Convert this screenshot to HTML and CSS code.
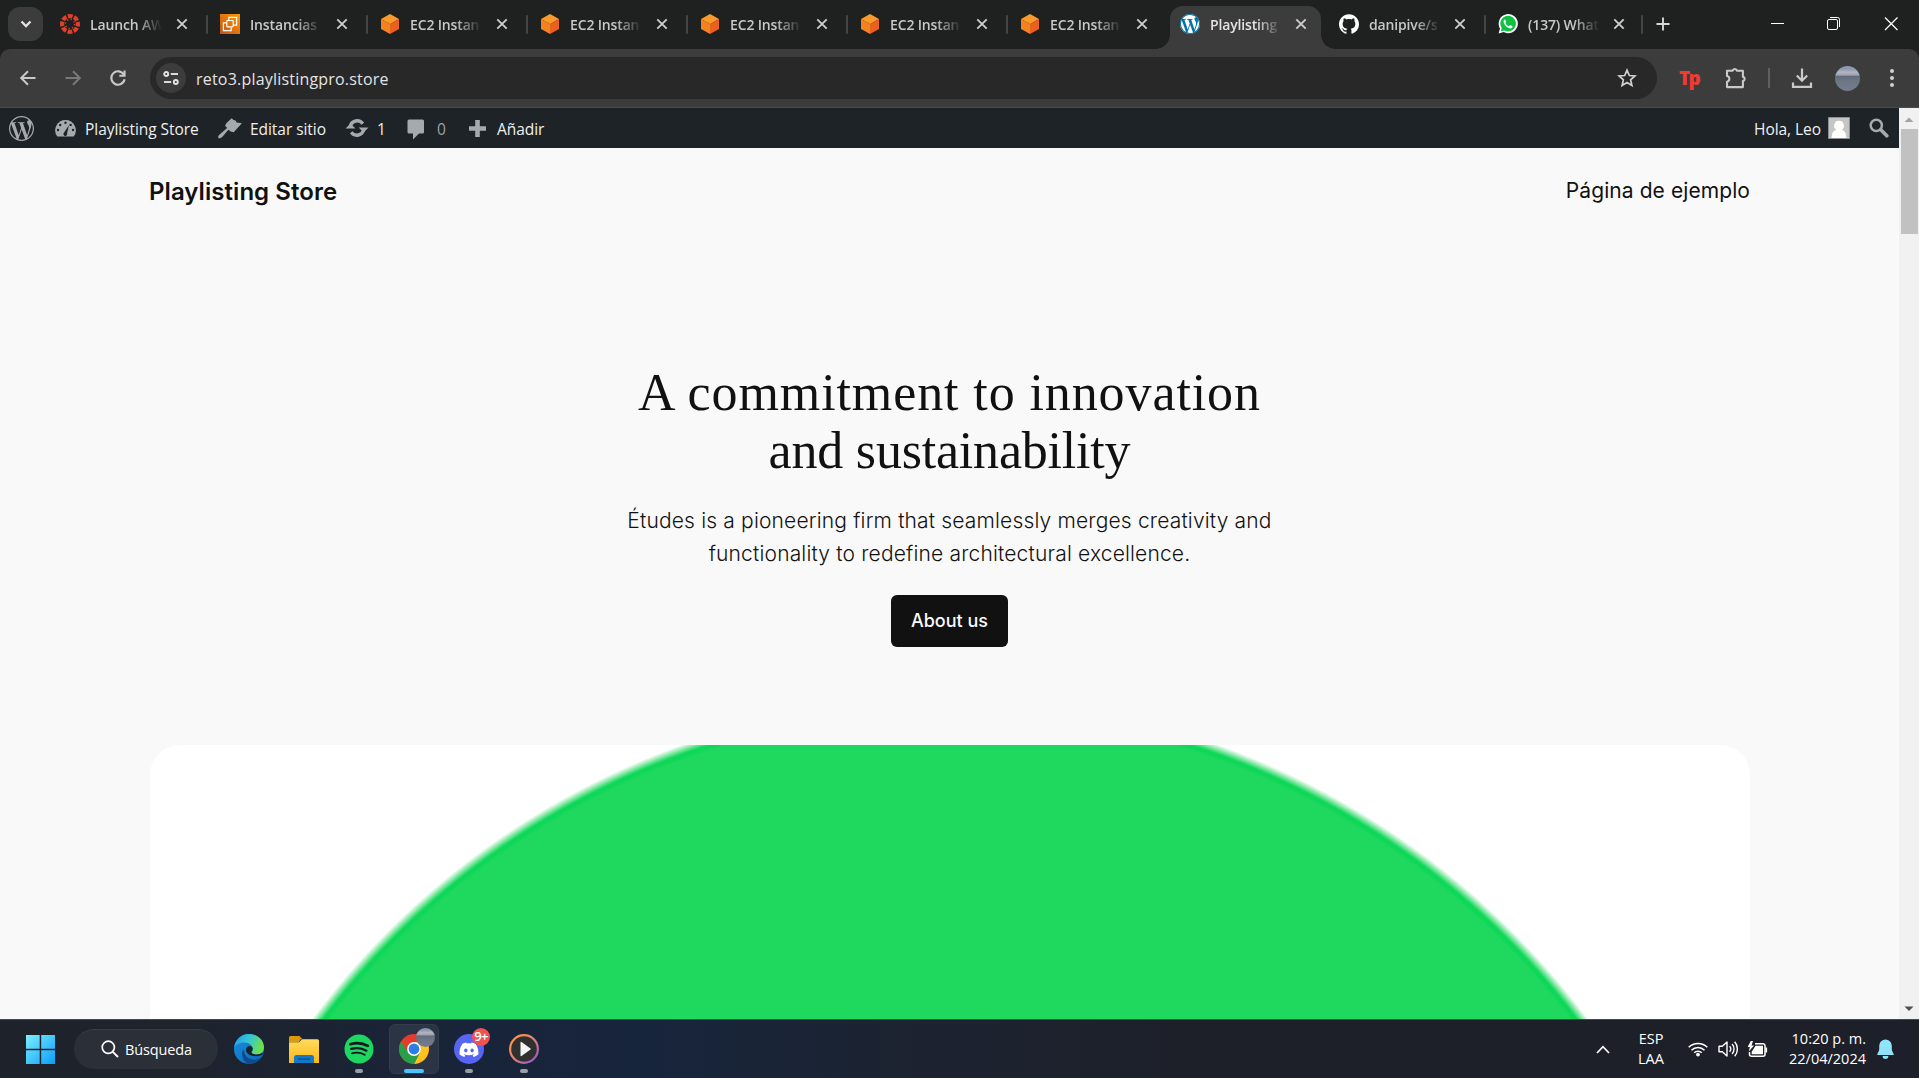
FILE: index.html
```html
<!DOCTYPE html>
<html lang="es">
<head>
<meta charset="utf-8">
<title>Playlisting Store</title>
<link rel="stylesheet" href="styles.css">
</head>
<body>
<svg class="defs" width="0" height="0" aria-hidden="true">
  <defs>
    <linearGradient id="gWin" x1="0" y1="0" x2="1" y2="1"><stop offset="0" stop-color="#7df0fd"/><stop offset="1" stop-color="#0a9dfb"/></linearGradient>
    <linearGradient id="gEdgeTop" x1="0" y1="0" x2="1" y2="0.3"><stop offset="0" stop-color="#1f9bdf"/><stop offset=".5" stop-color="#33c3dc"/><stop offset="1" stop-color="#6be04f"/></linearGradient>
    <linearGradient id="gEdgeLow" x1="0" y1="0" x2="1" y2="1"><stop offset="0" stop-color="#1b8fdd"/><stop offset="1" stop-color="#0b67b8"/></linearGradient>
    <linearGradient id="gFolder" x1="0" y1="0" x2="0" y2="1"><stop offset="0" stop-color="#ffdb5c"/><stop offset="1" stop-color="#fbb716"/></linearGradient>
    <linearGradient id="gMedia" x1="0" y1="0" x2="1" y2="1"><stop offset="0" stop-color="#ff9a3d"/><stop offset=".5" stop-color="#e98078"/><stop offset="1" stop-color="#7d56d8"/></linearGradient>
    <linearGradient id="gAws" x1="0" y1="1" x2="1" y2="0"><stop offset="0" stop-color="#c8511b"/><stop offset="1" stop-color="#f90"/></linearGradient>
    <symbol id="close" viewBox="0 0 12 12"><path d="M1.3 1.3l9.4 9.4M10.7 1.3l-9.4 9.4" stroke="currentColor" stroke-width="1.8" fill="none"/></symbol>
    <symbol id="cube" viewBox="0 0 20 20"><path d="M10 0l9 5-9 5.2L1 5z" fill="#fc9a29"/><path d="M1 5l9 5.200V20l-9-5z" fill="#f58220"/><path d="M19 5l-9 5.200V20l9-5z" fill="#e9601f"/></symbol>
    <symbol id="wp" viewBox="0 0 24 24"><path fill="currentColor" d="M21.469 6.825c.84 1.537 1.318 3.3 1.318 5.175 0 3.979-2.156 7.456-5.363 9.325l3.295-9.527c.615-1.54.82-2.771.82-3.864 0-.405-.026-.78-.07-1.11m-7.981.105c.647-.03 1.232-.105 1.232-.105.582-.075.514-.93-.067-.899 0 0-1.755.135-2.88.135-1.064 0-2.85-.15-2.85-.15-.585-.03-.661.855-.075.885 0 0 .54.061 1.125.09l1.68 4.605-2.37 7.08L5.354 6.9c.649-.03 1.234-.1 1.234-.1.585-.075.516-.93-.065-.896 0 0-1.746.138-2.874.138-.2 0-.438-.008-.69-.015C4.911 3.15 8.235 1.215 12 1.215c2.809 0 5.365 1.072 7.286 2.833-.046-.003-.091-.009-.141-.009-1.06 0-1.812.923-1.812 1.914 0 .89.513 1.643 1.06 2.531.411.72.89 1.643.89 2.977 0 .915-.354 1.994-.821 3.479l-1.075 3.585-3.9-11.61.001.014zM12 22.784c-1.059 0-2.081-.153-3.048-.437l3.237-9.406 3.315 9.087c.024.053.05.101.078.149-1.12.393-2.325.609-3.582.609M1.211 12c0-1.564.336-3.05.935-4.39L7.29 21.709C3.694 19.96 1.212 16.271 1.211 12M12 0C5.385 0 0 5.385 0 12s5.385 12 12 12 12-5.385 12-12S18.615 0 12 0"/></symbol>
  </defs>
</svg>

<header class="tabstrip">
  <button class="tab-search" aria-label="Buscar pestañas"><svg width="12" height="8" viewBox="0 0 12 8"><path d="M1.500 1.500L6 6l4.500-4.500" fill="none" stroke="#e3e3e3" stroke-width="2.300"/></svg></button>
  <nav class="tabs">
    <div class="tab sep">
      <svg class="fav" viewBox="0 0 20 20"><circle cx="10" cy="10" r="7.900" fill="none" stroke="#e13f2b" stroke-width="4.200" stroke-dasharray="4.700 1.505" stroke-dashoffset="2.350"/><circle cx="10" cy="10" r="4.600" fill="none" stroke="#e13f2b" stroke-width="1.300" stroke-dasharray="1.300 2.313"/></svg>
      <span class="label">Launch AWS</span><svg class="x"><use href="#close"/></svg>
    </div>
    <div class="tab sep">
      <svg class="fav" viewBox="0 0 20 20"><path fill="url(#gAws)" d="M0 0h20v20H0z"/><g fill="none" stroke="#fff" stroke-width="1.200"><rect x="6.800" y="6.500" width="6.400" height="6.400" rx=".8"/><path d="M8.800 6.200V3.300h7.800v7.800h-3.100M6.500 8.800H3.400v7.800h7.800v-3.400"/></g></svg>
      <span class="label">Instancias</span><svg class="x"><use href="#close"/></svg>
    </div>
    <div class="tab sep"><svg class="fav"><use href="#cube"/></svg><span class="label">EC2 Instan</span><svg class="x"><use href="#close"/></svg></div>
    <div class="tab sep"><svg class="fav"><use href="#cube"/></svg><span class="label">EC2 Instan</span><svg class="x"><use href="#close"/></svg></div>
    <div class="tab sep"><svg class="fav"><use href="#cube"/></svg><span class="label">EC2 Instan</span><svg class="x"><use href="#close"/></svg></div>
    <div class="tab sep"><svg class="fav"><use href="#cube"/></svg><span class="label">EC2 Instan</span><svg class="x"><use href="#close"/></svg></div>
    <div class="tab"><svg class="fav"><use href="#cube"/></svg><span class="label">EC2 Instan</span><svg class="x"><use href="#close"/></svg></div>
    <div class="tab active">
      <span class="fav fav-wp"><svg width="20" height="20"><use href="#wp"/></svg></span>
      <span class="label">Playlisting</span><svg class="x"><use href="#close"/></svg>
    </div>
    <div class="tab sep">
      <svg class="fav" viewBox="0 0 24 24"><path fill="#fff" d="M12 .297c-6.630 0-12 5.373-12 12 0 5.303 3.438 9.800 8.205 11.385.6.113.82-.258.82-.577 0-.285-.01-1.040-.015-2.040-3.338.724-4.042-1.610-4.042-1.610C4.422 18.070 3.633 17.700 3.633 17.700c-1.087-.744.084-.729.084-.729 1.205.084 1.838 1.236 1.838 1.236 1.070 1.835 2.809 1.305 3.495.998.108-.776.417-1.305.76-1.605-2.665-.3-5.466-1.332-5.466-5.930 0-1.310.465-2.380 1.235-3.220-.135-.303-.54-1.523.105-3.176 0 0 1.005-.322 3.300 1.230.96-.267 1.980-.399 3-.405 1.020.006 2.040.138 3 .405 2.280-1.552 3.285-1.230 3.285-1.230.645 1.653.24 2.873.12 3.176.765.84 1.230 1.910 1.230 3.220 0 4.610-2.805 5.625-5.475 5.920.42.36.81 1.096.81 2.220 0 1.606-.015 2.896-.015 3.286 0 .315.21.69.825.57C20.565 22.092 24 17.592 24 12.297c0-6.627-5.373-12-12-12"/></svg>
      <span class="label">danipive/s</span><svg class="x"><use href="#close"/></svg>
    </div>
    <div class="tab sep">
      <svg class="fav" viewBox="0 0 20 20"><path d="M.6 19.500l1.400-5A9.600 9.600 0 1 1 5.600 18z" fill="#fff"/><path d="M2.800 17.300l.9-3.200a7.800 7.800 0 1 1 2.700 2.400z" fill="#0dc143"/><path d="M6.700 5.500c-.9.500-1.400 1.600-1 2.900.8 2.900 3.200 5.100 5.900 5.900 1.300.3 2.600-.3 2.900-1.400.1-.5 0-.7-.2-.8l-2-.9c-.3-.1-.5 0-.7.200l-.7.900c-1.600-.6-2.800-1.700-3.600-3.200l.7-.9c.1-.2.100-.4 0-.7l-.8-1.800c-.1-.2-.3-.3-.500-.2z" fill="#fff"/></svg>
      <span class="label">(137) What</span><svg class="x"><use href="#close"/></svg>
    </div>
  </nav>
  <button class="new-tab" aria-label="Nueva pestaña"><svg width="14" height="14" viewBox="0 0 14 14"><path d="M7 .5v13M.5 7h13" stroke="#d5d5d5" stroke-width="1.900"/></svg></button>
  <div class="window-buttons">
    <svg width="57" height="48" viewBox="0 0 57 48"><path d="M22 23.500h13" stroke="#fff"/></svg>
    <svg width="56" height="48" viewBox="0 0 56 48"><g fill="none" stroke="#fff"><rect x="21.500" y="19.500" width="10" height="10" rx="1.500"/><path d="M24 17.500h7.500a2 2 0 0 1 2 2V27"/></g></svg>
    <svg width="57" height="48" viewBox="0 0 57 48"><path d="M23 17.500l12.500 12.500M35.500 17.500L23 30" stroke="#fff" stroke-width="1.200"/></svg>
  </div>
</header>

<div class="toolbar">
  <div class="nav-buttons">
    <svg width="18" height="18" viewBox="0 0 18 18"><path d="M16.500 9H3M9 2.200L2.200 9 9 15.800" fill="none" stroke="#c9c9c9" stroke-width="2"/></svg>
    <svg width="18" height="18" viewBox="0 0 18 18"><path d="M1.500 9H15M9 2.200L15.800 9 9 15.800" fill="none" stroke="#797979" stroke-width="2"/></svg>
    <svg width="18" height="18" viewBox="0 0 18 18"><path d="M14.800 5.600A6.700 6.700 0 1 0 15.600 10.300" fill="none" stroke="#c9c9c9" stroke-width="2.100"/><path d="M16.600 1.500v6.300h-6.300V5.800h4.200V1.500z" fill="#c9c9c9"/></svg>
  </div>
  <div class="omnibox">
    <span class="site-chip"><svg width="16" height="14" viewBox="0 0 16 14"><g fill="none" stroke="#e3e3e3" stroke-width="1.900"><circle cx="3.200" cy="3" r="2"/><path d="M7.800 3H15"/><circle cx="12.800" cy="11" r="2"/><path d="M1 11h7.200"/></g></svg></span>
    <span class="url">reto3.playlistingpro.store</span>
    <svg class="star" width="20" height="20" viewBox="0 0 20 20"><path d="M10 2.200l2.300 5.300 5.600.5-4.300 3.800 1.300 5.700-4.900-3-4.900 3 1.300-5.700L2.100 8l5.600-.5z" fill="none" stroke="#d0d0d0" stroke-width="1.700"/></svg>
  </div>
  <div class="extensions">
    <span class="tp">Tp</span>
    <svg class="puzzle" width="22" height="22" viewBox="0 0 22 22"><path d="M2 3.800h5.600a2.200 2.200 0 0 1 4.300 0h6v6a2.200 2.200 0 0 1 0 4.300v6H2v-5.400a2.900 2.900 0 0 0 0-5.700z" fill="none" stroke="#c9c9c9" stroke-width="2.100" stroke-linejoin="round"/></svg>
    <i class="divider"></i>
    <svg class="download" width="22" height="21" viewBox="0 0 22 21"><path d="M11 .5v12M5.800 7.500l5.200 5.200 5.200-5.200M2 14.500v4.300h18v-4.300" fill="none" stroke="#c9c9c9" stroke-width="2.200"/></svg>
    <span class="profile"></span>
    <svg class="dots" width="6" height="20" viewBox="0 0 6 20"><g fill="#d0d0d0"><circle cx="3" cy="3" r="2"/><circle cx="3" cy="10" r="2"/><circle cx="3" cy="17" r="2"/></g></svg>
  </div>
</div>

<div class="viewport">
  <div class="page">
    <div class="adminbar">
      <svg class="ab-logo" width="25" height="25"><use href="#wp"/></svg>
      <svg class="ab-gauge" width="21" height="17" viewBox="0 0 21 17"><path d="M10.500 0A10.300 10.300 0 0 0 2.300 16.500h16.400A10.300 10.300 0 0 0 10.500 0z" fill="#a7aaad"/><g fill="#1d2327"><circle cx="10.500" cy="2.800" r="1.200"/><circle cx="5.200" cy="5" r="1.200"/><circle cx="3" cy="10" r="1.200"/><circle cx="18" cy="10" r="1.200"/><circle cx="15.600" cy="4.900" r="1.200"/><path d="M13.900 5.200l-1.800 8.200a1.900 1.900 0 1 1-3-.9z"/></g></svg>
      <span class="ab-text ab-site">Playlisting Store</span>
      <svg class="ab-brush" width="24" height="21" viewBox="0 0 24 21"><path d="M8.500 5L13.700.2l1.800 1.900 2 .3 1.200 2 5.200.8-8.200 9-3-.7-2.300-1.700-6.200 7.200C2.600 20.500 1 20.600.5 20c-.6-.6-.4-2.200 1.100-3.500l7.500-6.500-2-2.300z" fill="#a7aaad"/></svg>
      <span class="ab-text ab-edit">Editar sitio</span>
      <svg class="ab-update" width="24" height="18" viewBox="0 0 24 18"><path d="M5.300 7.500a7 7 0 0 1 12.500-2.800M18.700 10.500A7 7 0 0 1 6.200 13.300" fill="none" stroke="#a7aaad" stroke-width="3.400"/><path d="M13.600 8.600H23.500L18.600 13.500zM.5 9.400h9.900L5.500 4.500z" fill="#a7aaad"/></svg>
      <span class="ab-text ab-count">1</span>
      <svg class="ab-comment" width="18" height="21" viewBox="0 0 18 21"><path d="M2 .5h13.500a1.500 1.500 0 0 1 1.500 1.500v11a1.500 1.500 0 0 1-1.500 1.500H12L6 20.500v-6H2A1.500 1.500 0 0 1 .5 13V2A1.500 1.500 0 0 1 2 .5z" fill="#a7aaad"/></svg>
      <span class="ab-text ab-zero">0</span>
      <svg class="ab-plus" width="17" height="17" viewBox="0 0 17 17"><path d="M8.500 0v17M0 8.500h17" stroke="#a7aaad" stroke-width="4.600"/></svg>
      <span class="ab-text ab-new">Añadir</span>
      <span class="ab-text ab-hello">Hola, Leo</span>
      <svg class="ab-avatar" width="22" height="22" viewBox="0 0 22 22"><path fill="#c5c5c5" stroke="#8c8f94" d="M.5.5h21v21H.5z"/><path d="M11 3.800a4.900 4.900 0 0 1 2.700 9c3.200.8 4.300 3.600 4.700 8.200H3.600c.4-4.600 1.500-7.400 4.700-8.200a4.900 4.900 0 0 1 2.700-9z" fill="#fff"/></svg>
      <svg class="ab-search" width="20" height="20" viewBox="0 0 20 20"><circle cx="7.300" cy="7.300" r="5.600" fill="none" stroke="#a7aaad" stroke-width="2.500"/><path d="M11.800 11.800l6 6" stroke="#a7aaad" stroke-width="3.600" stroke-linecap="round"/></svg>
    </div>
    <div class="site-header">
      <a class="site-title">Playlisting Store</a>
      <a class="site-link">Página de ejemplo</a>
    </div>
    <main class="hero">
      <h1><span class="h-line first">A commitment to innovation</span><span class="h-line second">and sustainability</span></h1>
      <p>Études is a pioneering firm that seamlessly merges creativity and<br>functionality to redefine architectural excellence.</p>
      <a class="cta">About us</a>
    </main>
    <div class="hero-image"></div>
  </div>
  <div class="scrollbar">
    <svg width="20" height="20" viewBox="0 0 20 20"><path d="M5.500 14L10 9.500l4.500 4.500z" fill="#a3a3a3"/></svg>
    <i class="thumb"></i>
    <svg class="down" width="20" height="20" viewBox="0 0 20 20"><path d="M5.500 7.500L10 12l4.500-4.500z" fill="#505050"/></svg>
  </div>
</div>

<footer class="taskbar">
  <svg class="start" width="29" height="29" viewBox="0 0 29 29"><path fill="url(#gWin)" d="M0 0h13.700v13.700H0zM15.200 0H29v13.700H15.200zM0 15.200h13.700V29H0zM15.200 15.200H29V29H15.200z"/></svg>
  <div class="search"><svg width="18" height="18" viewBox="0 0 18 18"><circle cx="7.300" cy="7.300" r="6.100" fill="none" stroke="#fff" stroke-width="1.700"/><path d="M11.800 11.800l5.200 5.200" stroke="#fff" stroke-width="1.900"/></svg><span>Búsqueda</span></div>
  <div class="apps">
    <div class="app"><svg width="30" height="30" viewBox="0 0 30 30"><circle cx="15" cy="15" r="15" fill="url(#gEdgeLow)"/><path d="M10 16c0 7 6.500 10.500 12 9.500 2.200-.5 4-1.500 5.500-2.500A15 15 0 0 1 15 30C9.500 28 7 22 8.500 17z" fill="#114a8b"/><path d="M.2 13.500C1 6 7 0 15 0c8.500 0 15 6.300 15 13.200 0 4.300-3 7.300-7 7.300-3 0-5.600-1-5.600-2.300 0-.8 1.300-1.300 1.300-3.400 0-2.800-3-6.300-8-6.300C6 8.500 2 10.500.2 13.500z" fill="url(#gEdgeTop)"/><path d="M28.500 20.500c-1.500 1-3.500 1.700-6.500 1.700-5.500 0-10-2.500-10-6.200 0-2.500 2-4 4-4 1.700 0 2.700 1.500 2.700 2.900 0 2-1.300 2.500-1.300 3.300 0 1.300 2.600 2.300 5.600 2.300 2.300 0 4.200-.8 5.500-2z" fill="#1c222d"/></svg></div>
    <div class="app"><svg width="30" height="30" viewBox="0 0 30 30"><path d="M0 3.500A1.500 1.500 0 0 1 1.500 2h9l3 3.200h-2L10 8H0z" fill="#dc9a07"/><path d="M0 8.300h10l3-3h15.500A1.500 1.500 0 0 1 30 6.800V29H0z" fill="url(#gFolder)"/><path d="M5 29v-5.500A2.500 2.500 0 0 1 7.500 21h15a2.500 2.500 0 0 1 2.500 2.500V29z" fill="#1279c9"/><path d="M9 25h12" stroke="#0a4e8e" stroke-width="1.400"/></svg></div>
    <div class="app running"><svg width="30" height="30" viewBox="0 0 30 30"><circle cx="15" cy="15" r="14.500" fill="#1ed760"/><g fill="none" stroke="#101820" stroke-linecap="round"><path d="M6.300 10.200c6-1.700 12.500-1.100 17.600 1.700" stroke-width="2.700"/><path d="M7.200 14.900c5-1.400 10.800-.8 15.200 1.800" stroke-width="2.200"/><path d="M8 19.300c4.300-1.200 9-.7 12.700 1.500" stroke-width="1.900"/></g></svg></div>
    <div class="app running current"><svg width="30" height="30" viewBox="0 0 30 30"><circle cx="15" cy="15" r="15" fill="#e33b2e"/><path d="M15 8.200h13.300A15 15 0 0 1 15 30l5.900-11.600z" fill="#fcc31e"/><path d="M2.010 7.500A15 15 0 0 0 15 30l5.900-11.600L9.100 18.400z" fill="#26a148"/><circle cx="15" cy="15" r="6.900" fill="#fff"/><circle cx="15" cy="15" r="5.400" fill="#2f7ce8"/></svg><span class="mini-profile"></span></div>
    <div class="app running"><svg width="30" height="30" viewBox="0 0 30 30"><circle cx="15" cy="15" r="15" fill="#5865f2"/><path transform="translate(5.500 6.200) scale(.79)" fill="#fff" d="M20.317 4.370a19.791 19.791 0 0 0-4.885-1.515.074.074 0 0 0-.079.037c-.211.375-.445.865-.608 1.250-1.845-.276-3.680-.276-5.487 0-.164-.393-.406-.874-.618-1.250a.077.077 0 0 0-.079-.037 19.736 19.736 0 0 0-4.885 1.515.070.070 0 0 0-.032.028C.533 9.046-.319 13.580.099 18.058a.082.082 0 0 0 .031.056c2.053 1.508 4.041 2.423 5.993 3.029a.078.078 0 0 0 .084-.028c.462-.630.873-1.295 1.226-1.994a.076.076 0 0 0-.042-.106c-.653-.248-1.274-.550-1.872-.892a.077.077 0 0 1-.008-.128c.126-.094.252-.192.372-.291a.074.074 0 0 1 .078-.011c3.928 1.793 8.180 1.793 12.061 0a.074.074 0 0 1 .079.010c.120.099.246.198.373.292a.077.077 0 0 1-.007.128 12.299 12.299 0 0 1-1.873.891.077.077 0 0 0-.041.107c.360.698.772 1.363 1.225 1.993a.076.076 0 0 0 .084.029c1.961-.607 3.950-1.522 6.002-3.029a.077.077 0 0 0 .031-.055c.500-5.177-.838-9.674-3.549-13.660a.061.061 0 0 0-.031-.029zM8.020 15.331c-1.183 0-2.157-1.086-2.157-2.419 0-1.333.956-2.419 2.157-2.419 1.211 0 2.176 1.095 2.157 2.419 0 1.333-.956 2.419-2.157 2.419zm7.975 0c-1.183 0-2.157-1.086-2.157-2.419 0-1.333.955-2.419 2.157-2.419 1.211 0 2.176 1.095 2.157 2.419 0 1.333-.946 2.419-2.157 2.419z"/></svg><span class="badge">9+</span></div>
    <div class="app running"><svg width="30" height="30" viewBox="0 0 30 30"><circle cx="15" cy="15" r="13.900" fill="#303030" stroke="url(#gMedia)" stroke-width="2.200"/><path d="M11.500 8.600v12.800a.7.7 0 0 0 1 .6l9-6.400a.8.8 0 0 0 0-1.200l-9-6.400a.7.7 0 0 0-1 .6z" fill="#f4f4f4"/></svg></div>
  </div>
  <div class="tray">
    <svg class="chev" width="14" height="9" viewBox="0 0 14 9"><path d="M1 8l6-6.300L13 8" fill="none" stroke="#fff" stroke-width="1.700"/></svg>
    <div class="lang"><span>ESP</span><span>LAA</span></div>
    <svg class="wifi" width="20" height="16" viewBox="0 0 20 16"><g fill="none" stroke="#fff" stroke-width="1.500"><path d="M.7 6.300a13 13 0 0 1 18.600 0M3.500 9.200a9 9 0 0 1 13 0M6.200 11.800a5.300 5.300 0 0 1 7.600 0"/></g><circle cx="10" cy="13.600" r="1.900" fill="#fff"/></svg>
    <svg class="vol" width="21" height="18" viewBox="0 0 21 18"><g fill="none" stroke="#fff" stroke-width="1.400"><path d="M1 6.300h3.300L9 2v14l-4.700-4.300H1z" stroke-linejoin="round"/><path d="M11.600 6.300a4 4 0 0 1 0 5.400M14.100 4a7.500 7.500 0 0 1 0 10M16.700 1.800a11 11 0 0 1 0 14.400"/></g></svg>
    <svg class="bat" width="21" height="17" viewBox="0 0 21 17"><path d="M8 2.700h8a2 2 0 0 1 2 2v8.600a2 2 0 0 1-2 2H4.500a2 2 0 0 1-2-2V11" fill="none" stroke="#fff" stroke-width="1.500"/><path d="M8.500 4.800H16v8.500H4.700v-2.500z" fill="#fff"/><path d="M18.500 6.500h1.600v5h-1.600z" fill="#fff"/><path d="M3.800 0L.6 6h2.200L1.800 10.500 7 4.500H4.500L6 0z" fill="#fff"/></svg>
    <div class="clock"><span class="time">10:20 p. m.</span><span>22/04/2024</span></div>
    <svg class="bell" width="17" height="20" viewBox="0 0 17 20"><path d="M8.500.5A6.300 6.300 0 0 1 14.800 6.800V11l1.900 4.200v.8H.3v-.8L2.200 11V6.800A6.300 6.300 0 0 1 8.500.5zM5.600 17h5.800a2.900 2.900 0 0 1-5.800 0z" fill="#8fe3fb"/></svg>
  </div>
</footer>
</body>
</html>
```
FILE: styles.css
```css
* { box-sizing: border-box; }
html, body { height: 100%; }
body {
  margin: 0;
  display: flex;
  flex-direction: column;
  overflow: hidden;
  background: #1f2120;
  font-family: "Open Sans", "Noto Sans", sans-serif;
}
svg { display: block; flex: none; }
button { padding: 0; border: 0; background: none; }
.defs { position: absolute; }

/* Tab strip */
.tabstrip { flex: none; height: 49px; display: flex; background: #1f2120; }
.tab-search {
  width: 35px; height: 34px; margin: 7px 7px 0 8px; border-radius: 12px;
  background: #3c3c3c; display: flex; align-items: center; justify-content: center;
}
.tabs { display: flex; gap: 8px; padding-top: 6px; }
.tab {
  position: relative; width: 152px; height: 43px; padding: 0 0 7px 10px;
  display: flex; align-items: center; color: #c8c8c8;
}
.tab:nth-child(n+8) { width: 151px; }
.tab:nth-child(n+8) .label { margin-right: 13px; }
.tab.sep::after {
  content: ""; position: absolute; right: -6px; top: 9px;
  width: 2px; height: 19px; border-radius: 1px; background: #454545;
}
.tab.sep:last-child::after { right: -4px; }
.tab.active { background: #3c3c3c; border-radius: 13px 13px 0 0; color: #e3e3e3; }
.tab.active::before, .tab.active::after {
  content: ""; position: absolute; bottom: 0; width: 14px; height: 14px;
}
.tab.active::before { left: -14px; background: radial-gradient(circle at 0 0, transparent 13.500px, #3c3c3c 14px); }
.tab.active::after { right: -14px; background: radial-gradient(circle at 100% 0, transparent 13.500px, #3c3c3c 14px); }
.fav { width: 20px; height: 20px; flex: none; }
.fav-wp { border-radius: 50%; background: #fff; color: #0073aa; }
.label {
  flex: none; width: 72px; margin: 1px 14px 0 10px; white-space: nowrap;
  font-size: 14px; font-weight: 600; line-height: 20px; letter-spacing: -0.150px;
  -webkit-mask-image: linear-gradient(90deg, #000 46px, transparent 72px);
  mask-image: linear-gradient(90deg, #000 46px, transparent 72px);
}
.x { width: 12px; height: 12px; color: #cfcfcf; }
.new-tab { margin: 17px 0 0 17px; height: 14px; }
.window-buttons { display: flex; margin-left: auto; }

/* Toolbar */
.toolbar {
  flex: none; height: 59px; display: flex; padding: 8px 0 8px 19px;
  background: #3c3c3c; border-bottom: 1px solid #4b4b4b; border-radius: 10px 10px 0 0;
}
.nav-buttons { display: flex; gap: 27px; align-items: center; width: 131px; }
.omnibox {
  width: 1507px; height: 42px; border-radius: 21px; background: #282828;
  display: flex; align-items: center; padding: 0 20px 0 6px;
}
.site-chip {
  width: 30px; height: 30px; border-radius: 50%; background: #3c3c3c;
  display: flex; align-items: center; justify-content: center;
}
.url { margin: 1px 0 0 10px; font-size: 16px; letter-spacing: 0.200px; color: #e3e3e3; flex: 1; }
.extensions { display: flex; align-items: center; }
.tp { width: 22px; margin: 0 1px 0 22px; color: #f23a33; font-size: 19px; font-weight: 800; letter-spacing: -1.800px; line-height: 20px; }
.puzzle { margin-left: 23px; }
.divider { width: 2px; height: 20px; margin-left: 21px; background: #606060; }
.download { margin-left: 21px; }
.profile, .mini-profile {
  border-radius: 50%;
  background: linear-gradient(#8d98ad 0 12%, #b3b4c2 25%, #9fa3ae 36%, #626d7b 42%, #6c7684 62%, #767c92 100%);
}
.profile { width: 25px; height: 25px; margin-left: 22px; }
.dots { margin-left: 29px; }

/* Web content */
.viewport { flex: 1; min-height: 0; display: flex; }
.page { flex: 1; display: flex; flex-direction: column; background: #f9f9f9; overflow: hidden; font-family: Inter, sans-serif; color: #111; }
.adminbar {
  flex: none; height: 40px; background: #1d2327; display: flex; align-items: center;
  font-family: "Open Sans", "Noto Sans", sans-serif; color: #a7aaad;
}
.ab-text { font-size: 15.500px; line-height: 20px; letter-spacing: -0.050px; color: #f0f0f1; white-space: nowrap; margin-top: 2px; }
.ab-logo { margin-left: 9px; }
.ab-gauge { margin-left: 21px; }
.ab-site { width: 124px; margin-left: 9px; }
.ab-brush { margin-left: 9px; }
.ab-edit { width: 86px; margin-left: 8px; }
.ab-update { margin-left: 9px; }
.ab-count { width: 22px; margin-left: 8px; }
.ab-comment { margin: 2px 0 0 8px; }
.ab-zero { width: 20px; margin-left: 12px; color: #9ca1a7; }
.ab-plus { margin-left: 12px; }
.ab-new { margin-left: 11px; }
.ab-hello { margin-left: auto; }
.ab-avatar { margin-left: 7px; }
.ab-search { margin: 0 10px 0 19px; }

.site-header { flex: none; display: flex; justify-content: space-between; align-items: center; height: 86px; padding: 0 149px 0 149px; }
.site-title { font-size: 24px; font-weight: 600; letter-spacing: 0.060px; }
.site-link { font-size: 21px; letter-spacing: 0.080px; margin-bottom: 1px; }
.hero { flex: none; height: 511px; padding-top: 130px; display: flex; flex-direction: column; align-items: center; text-align: center; }
h1 { margin: 0; font: 400 52px/57.500px "Liberation Serif", serif; }
.h-line { display: block; white-space: nowrap; }
.first { letter-spacing: 0.900px; }
.second { letter-spacing: -0.200px; }
p { margin: 25px 0 0; font-size: 21px; line-height: 33px; font-weight: 350; letter-spacing: 0.165px; }
.cta {
  width: 117px; height: 52px; margin-top: 25px; border-radius: 6px; background: #111; color: #f9f9f9;
  font-size: 18px; font-weight: 550; line-height: 52px;
}
.hero-image {
  flex: 1; margin: 0 149px 0 150px; border-radius: 30px 30px 0 0;
  background: radial-gradient(circle at 800px 748px, #1fd95f 780px, #0cd757 784px, #12d85b 786px, #8ceaa9 790.500px, #fff 795px);
}
.scrollbar { width: 20px; background: #f1f1f1; display: flex; flex-direction: column; }
.thumb { width: 17px; height: 105px; margin: 1px 0 0 2px; background: #c1c1c1; }
.down { margin-top: auto; }

/* Taskbar */
.taskbar {
  flex: none; height: 59px; display: flex; align-items: center; color: #fff;
  border-top: 1px solid #44484f;
  background: linear-gradient(90deg, #1e222b 0, #1e232d 180px, #18243a 480px, #17253c 640px, #1c2331 900px, #1d2029 1200px, #1d202a 100%);
}
.start { margin-left: 26px; }
.search {
  width: 144px; height: 40px; margin: 0 0 1px 19px; padding-left: 27px; border-radius: 20px;
  background: #2b2f38; border-top: 1px solid #383c45; display: flex; align-items: center; gap: 6px;
  font-size: 14.500px; letter-spacing: -0.150px;
}
.apps { display: flex; gap: 5px; margin-left: 6px; }
.app { position: relative; width: 50px; height: 50px; border-radius: 6px; display: flex; align-items: center; justify-content: center; }
.running::after {
  content: ""; position: absolute; bottom: 1px; left: 21px; width: 8px; height: 4px; border-radius: 2px; background: #9a9fa6;
}
.current { background: #2a3444; border: 1px solid #323c4b; }
.current::after { left: 14px; width: 20px; bottom: 0; background: #4cc2ff; }
.mini-profile { position: absolute; left: 26px; top: 3px; width: 19px; height: 19px; }
.badge {
  position: absolute; left: 28px; top: 4px; width: 18px; height: 18px; border-radius: 50%;
  background: #ee5253; font-size: 13px; font-weight: 600; line-height: 17px; text-align: center; letter-spacing: -0.800px;
}
.tray { display: flex; align-items: center; margin-left: auto; font-size: 14.500px; line-height: 20px; }
.tray span { display: block; }
.lang { width: 28px; margin-left: 27px; text-align: center; }
.wifi { margin-left: 23px; }
.vol { margin-left: 10px; }
.bat { margin-left: 8px; }
.clock { width: 98px; text-align: right; white-space: nowrap; }
.bell { margin: 0 25px 0 11px; }
```
